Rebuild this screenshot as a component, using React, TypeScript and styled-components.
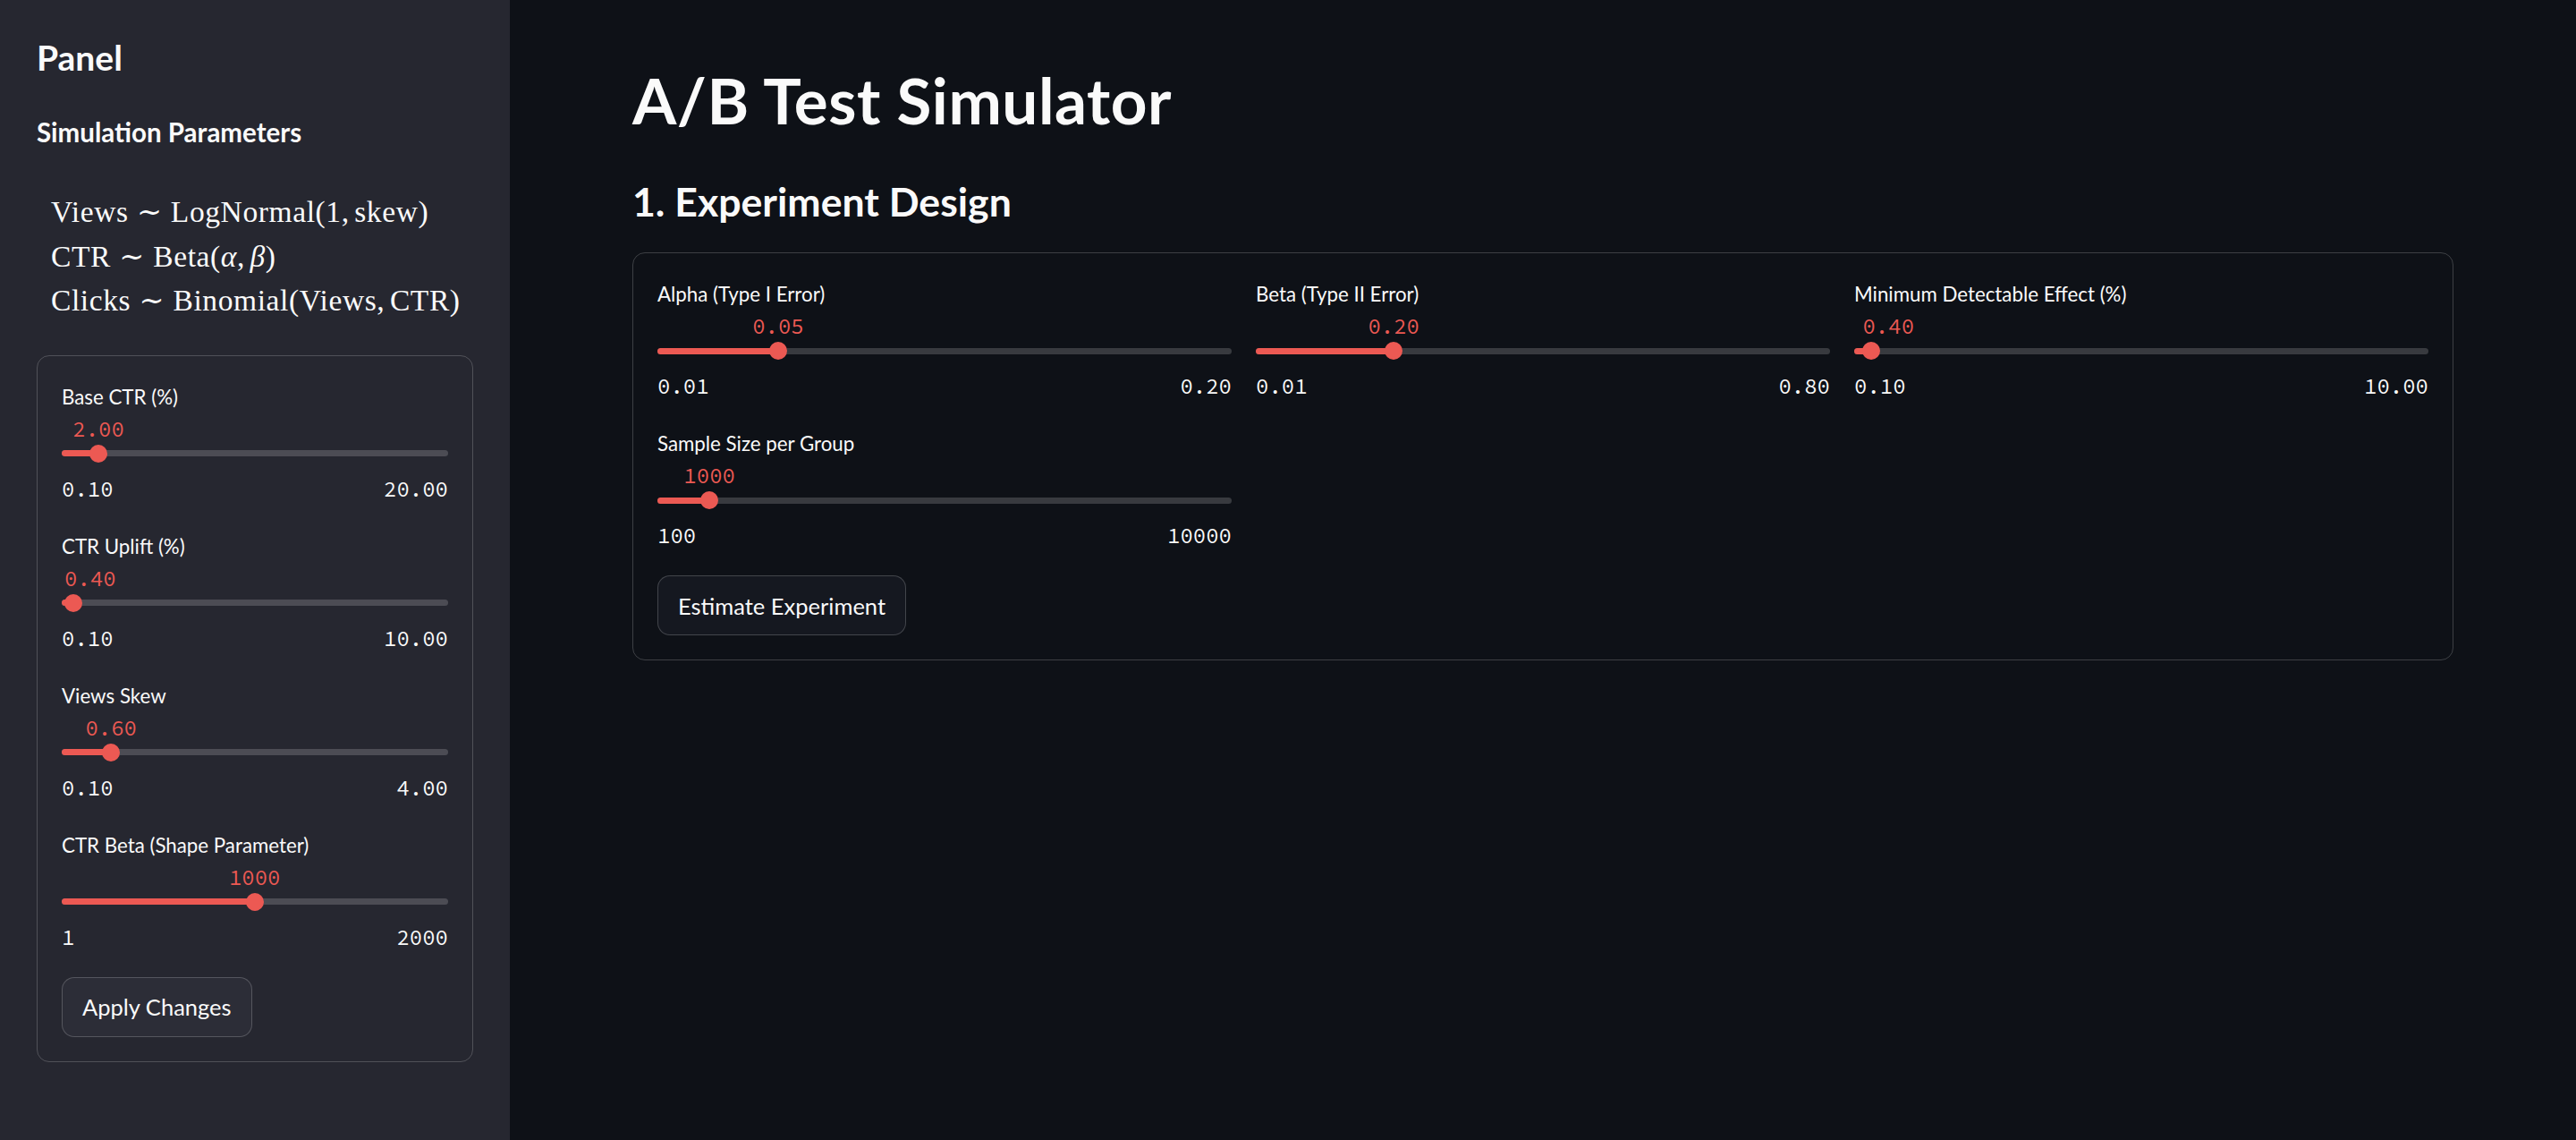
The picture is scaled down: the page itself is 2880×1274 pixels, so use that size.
import React, { useLayoutEffect, useRef, useState } from "react";
import styled, { createGlobalStyle } from "styled-components";

const RED = "#ec5953";
const TEXT = "#fafafa";
const THUMB = 20;

const GlobalStyle = createGlobalStyle`
  html, body { margin: 0; padding: 0; background: #0e1117; }
  body { font-family: Lato, "Source Sans Pro", sans-serif; color: ${TEXT}; }
  * { box-sizing: border-box; }
`;

const Shell = styled.div`
  display: flex;
  width: 2880px;
  min-height: 1274px;
`;

const Sidebar = styled.aside`
  width: 570px;
  flex: none;
  background: #262730;
  padding: 41px 41px 0 41px;
  display: flex;
  flex-direction: column;
`;

const Main = styled.main`
  flex: 1;
  padding: 70px 137px 0 137px;
  display: flex;
  flex-direction: column;
`;

const SideTitle = styled.h2`
  margin: 0;
  font-size: 39px;
  line-height: 47px;
  font-weight: 700;
`;

const SideSubtitle = styled.h4`
  margin: 42px 0 0 0;
  font-size: 29.5px;
  line-height: 35px;
  font-weight: 700;
`;

const MathBlock = styled.div`
  margin: 47px 0 36px 0;
  padding-left: 16px;
  font-family: "Liberation Serif", "DejaVu Serif", serif;
  font-size: 33.5px;
  line-height: 49.5px;
  letter-spacing: 0.6px;
`;

const MathLine = styled.div`
  white-space: nowrap;
`;

const Rel = styled.span`
  margin: 0 0.2778em;
`;

const Thin = styled.span`
  display: inline-block;
  width: 0.1667em;
`;

const Var = styled.i`
  font-style: italic;
`;

const Title = styled.h1`
  margin: 0;
  font-size: 71px;
  line-height: 84px;
  font-weight: 700;
  letter-spacing: 0.5px;
`;

const Subheader = styled.h3`
  margin: 44px 0 0 0;
  font-size: 44.6px;
  line-height: 54px;
  font-weight: 700;
`;

const Card = styled.section<{ $gapTop?: number }>`
  margin-top: ${(p) => p.$gapTop ?? 0}px;
  border: 1px solid rgba(250, 250, 250, 0.2);
  border-radius: 14px;
  padding: 27px;
  display: flex;
  flex-direction: column;
  gap: 28px;
  align-items: flex-start;
`;

const Grid = styled.div`
  align-self: stretch;
  display: grid;
  grid-template-columns: repeat(3, 1fr);
  column-gap: 27px;
  row-gap: 29px;
`;

const Stack = styled.div`
  align-self: stretch;
  display: flex;
  flex-direction: column;
  gap: 29px;
`;

const Block = styled.div`
  display: flex;
  flex-direction: column;
  min-width: 0;
`;

const Label = styled.div`
  font-size: 22.3px;
  line-height: 38px;
  height: 38px;
  white-space: nowrap;
`;

const Mono = styled.span`
  font-family: "Source Code Pro", "Liberation Mono", monospace;
  font-size: 24px;
`;

const ValueRow = styled.div`
  height: 34px;
  line-height: 34px;
  white-space: nowrap;
`;

const ValueText = styled(Mono)`
  display: inline-block;
  color: ${RED};
`;

const TrackRow = styled.div`
  position: relative;
  height: 20px;
  display: flex;
  align-items: center;
`;

const Rail = styled.div`
  flex: 1;
  height: 7px;
  border-radius: 4px;
  background: rgba(250, 250, 250, 0.18);
`;

const Fill = styled.div`
  position: absolute;
  left: 0;
  top: 6.5px;
  height: 7px;
  border-radius: 4px 0 0 4px;
  background: ${RED};
`;

const Thumb = styled.div`
  position: absolute;
  top: 0;
  width: ${THUMB}px;
  height: ${THUMB}px;
  border-radius: 50%;
  background: ${RED};
`;

const Ticks = styled.div`
  margin-top: 14px;
  height: 32px;
  line-height: 32px;
  display: flex;
  justify-content: space-between;
`;

const Button = styled.button<{ $tone: "main" | "side" }>`
  height: 67px;
  padding: 0 22px;
  border: 1px solid rgba(250, 250, 250, 0.2);
  border-radius: 14px;
  background: ${(p) => (p.$tone === "main" ? "#151820" : "#2c2d37")};
  color: ${TEXT};
  font-family: Lato, "Source Sans Pro", sans-serif;
  font-size: 25.5px;
  cursor: pointer;
`;

type SliderProps = {
  label: string;
  min: number;
  max: number;
  value: number;
  minText: string;
  maxText: string;
  valueText: string;
};

function Slider({ label, min, max, value, minText, maxText, valueText }: SliderProps) {
  const frac = (value - min) / (max - min);
  const trackRef = useRef<HTMLDivElement>(null);
  const valRef = useRef<HTMLSpanElement>(null);
  const [offset, setOffset] = useState(0);

  useLayoutEffect(() => {
    if (!trackRef.current || !valRef.current) return;
    const w = trackRef.current.offsetWidth;
    const tw = valRef.current.offsetWidth;
    const c = frac * w;
    setOffset(c - tw / 2 < 0 ? c - THUMB / 2 : c - tw / 2);
  }, [frac]);

  return (
    <Block>
      <Label>{label}</Label>
      <ValueRow>
        <ValueText ref={valRef} style={{ marginLeft: offset }}>
          {valueText}
        </ValueText>
      </ValueRow>
      <TrackRow ref={trackRef}>
        <Rail />
        <Fill style={{ width: `${frac * 100}%` }} />
        <Thumb style={{ left: `calc(${frac * 100}% - ${THUMB / 2}px)` }} />
      </TrackRow>
      <Ticks>
        <Mono>{minText}</Mono>
        <Mono>{maxText}</Mono>
      </Ticks>
    </Block>
  );
}

const sideSliders: SliderProps[] = [
  { label: "Base CTR (%)", min: 0.1, max: 20, value: 2, minText: "0.10", maxText: "20.00", valueText: "2.00" },
  { label: "CTR Uplift (%)", min: 0.1, max: 10, value: 0.4, minText: "0.10", maxText: "10.00", valueText: "0.40" },
  { label: "Views Skew", min: 0.1, max: 4, value: 0.6, minText: "0.10", maxText: "4.00", valueText: "0.60" },
  { label: "CTR Beta (Shape Parameter)", min: 1, max: 2000, value: 1000, minText: "1", maxText: "2000", valueText: "1000" },
];

const mainSliders: SliderProps[] = [
  { label: "Alpha (Type I Error)", min: 0.01, max: 0.2, value: 0.05, minText: "0.01", maxText: "0.20", valueText: "0.05" },
  { label: "Beta (Type II Error)", min: 0.01, max: 0.8, value: 0.2, minText: "0.01", maxText: "0.80", valueText: "0.20" },
  { label: "Minimum Detectable Effect (%)", min: 0.1, max: 10, value: 0.4, minText: "0.10", maxText: "10.00", valueText: "0.40" },
  { label: "Sample Size per Group", min: 100, max: 10000, value: 1000, minText: "100", maxText: "10000", valueText: "1000" },
];

export default function App() {
  return (
    <>
      <GlobalStyle />
      <Shell>
        <Sidebar>
          <SideTitle>Panel</SideTitle>
          <SideSubtitle>Simulation Parameters</SideSubtitle>
          <MathBlock>
            <MathLine>
              Views<Rel>∼</Rel>LogNormal(1,<Thin />skew)
            </MathLine>
            <MathLine>
              CTR<Rel>∼</Rel>Beta(<Var>α</Var>,<Thin /><Var>β</Var>)
            </MathLine>
            <MathLine>
              Clicks<Rel>∼</Rel>Binomial(Views,<Thin />CTR)
            </MathLine>
          </MathBlock>
          <Card>
            <Stack>
              {sideSliders.map((s) => (
                <Slider key={s.label} {...s} />
              ))}
            </Stack>
            <Button $tone="side">Apply Changes</Button>
          </Card>
        </Sidebar>
        <Main>
          <Title>A/B Test Simulator</Title>
          <Subheader>1. Experiment Design</Subheader>
          <Card $gapTop={30}>
            <Grid>
              {mainSliders.map((s) => (
                <Slider key={s.label} {...s} />
              ))}
            </Grid>
            <Button $tone="main">Estimate Experiment</Button>
          </Card>
        </Main>
      </Shell>
    </>
  );
}
